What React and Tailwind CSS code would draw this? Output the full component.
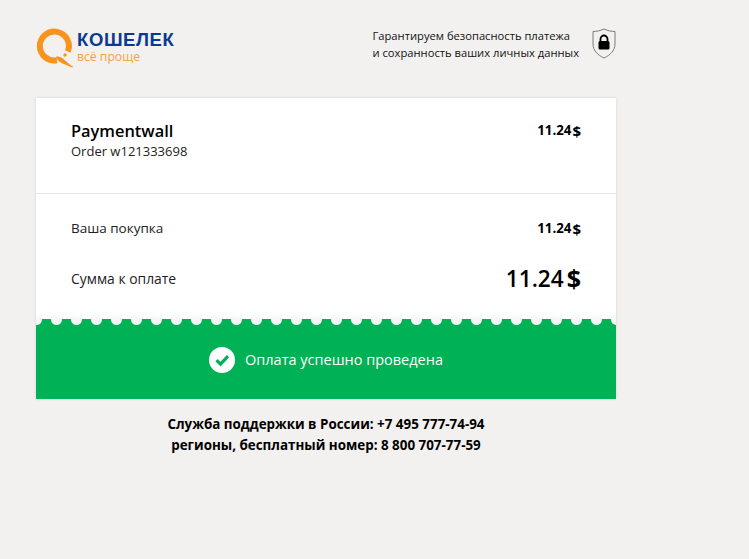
const font = 'font-["Open_Sans","Noto_Sans",sans-serif]'

function QiwiRing() {
  return (
    <svg width="40" height="42" viewBox="0 0 40 42" className="shrink-0">
      <path
        d="M21 32.300A14.500 14.500 0 1 1 31.800 23.500"
        fill="none"
        stroke="#f7941d"
        strokeWidth="6"
        strokeLinecap="butt"
      />
      <path d="M20 28.500c3.500-.5 6 1 8.500 3.500l5 4.200 3.500 2.600-.8.700-9-3.800c-3.500-1.500-6-3-7.200-7.200z" fill="#f7941d" />
      <circle cx="29" cy="27" r="1.700" fill="#f7941d" />
    </svg>
  )
}

function LockBadge() {
  return (
    <svg width="24" height="31" viewBox="0 0 24 31" className="shrink-0">
      <path d="M1 3.500c3.500 0 7-.7 11-2.500 4 1.800 7.500 2.500 11 2.500V16c0 6.500-4.500 11-11 14C5.500 27 1 22.500 1 16z" fill="#f3f1f0" stroke="#7b7b7b" strokeWidth="1" />
      <path d="M8.500 13.500V11a3.500 3.500 0 0 1 7 0v2.500" fill="none" stroke="#000" strokeWidth="1.800" />
      <rect x="6.500" y="13" width="11" height="8.500" rx="1.500" fill="#000" />
    </svg>
  )
}

function CheckCircle() {
  return (
    <svg width="26" height="26" viewBox="0 0 26 26" className="shrink-0">
      <circle cx="13" cy="13" r="13" fill="#fff" />
      <path d="M7.500 13.200l4 4 7.500-8" fill="none" stroke="#00b156" strokeWidth="3.200" />
    </svg>
  )
}

function Scallops() {
  const dots = Array.from({ length: 30 })
  return (
    <div className="absolute left-0 right-0 top-[-5px] h-[11px] overflow-hidden">
      <div className="flex ml-[-5px] gap-[9px]">
        {dots.map((_, i) => (
          <span key={i} className="block w-[11px] h-[11px] shrink-0 rounded-full bg-gradient-to-b from-[#fefefe] via-[#f8f7f6] to-[#f3f1f0]" />
        ))}
      </div>
    </div>
  )
}

function Amount({ className, gap }) {
  return (
    <span className={`flex items-center ${className}`}>
      <span>11.24</span>
      <span className={`font-bold ${gap}`}>$</span>
    </span>
  )
}

export default function App() {
  return (
    <div className={`min-h-[559px] bg-[#f3f1f0] text-black overflow-hidden ${font}`}>
      <div className="w-[580px] ml-[36px]">
        <header className="h-[98px] flex items-start justify-between">
          <div className="flex items-start mt-[28px]">
            <QiwiRing />
            <div className="ml-[1px] pt-[1px]">
              <div className="text-[#0a3a8f] text-[18.500px] leading-[21px] font-bold tracking-[0.6px] font-['Liberation_Sans',sans-serif]">КОШЕЛЕК</div>
              <div className="text-[#f7a13a] text-[12.200px] leading-[14px]">всё проще</div>
            </div>
          </div>
          <div className="flex items-start mt-[27px]">
            <div className="text-[11.200px] leading-[17px] text-[#111] whitespace-nowrap">
              Гарантируем безопасность платежа
              <br />
              и сохранность ваших личных данных
            </div>
            <div className="ml-[13px] mt-[1px]">
              <LockBadge />
            </div>
          </div>
        </header>

        <main className="bg-white shadow-[0_0_3px_rgba(0,0,0,0.12)]">
          <section className="h-[96px] px-[35px] pt-[23px] flex justify-between border-b border-[#e8e8e8]">
            <div>
              <div className="text-[16.400px] leading-[20px] font-semibold">Paymentwall</div>
              <div className="text-[13px] leading-[20px] text-[#222]">Order w121333698</div>
            </div>
            <Amount className="h-[20px] text-[13.300px] font-bold" gap="ml-[1px] text-[15px]" />
          </section>
          <section className="h-[125px] px-[35px]">
            <div className="flex justify-between items-center pt-[24px] h-[44px]">
              <span className="text-[13.500px] text-[#222]">Ваша покупка</span>
              <Amount className="mt-[2px] text-[13.300px] font-bold" gap="ml-[1px] text-[15px]" />
            </div>
            <div className="flex justify-between items-center mt-[26px] h-[30px]">
              <span className="text-[13.900px] text-[#222]">Сумма к оплате</span>
              <Amount className="text-[22.600px] font-semibold" gap="ml-[3px] text-[25px]" />
            </div>
          </section>
          <section className="relative h-[80px] pt-[1px] bg-[#00b156] flex items-center justify-center gap-[10px] text-white text-[14.500px]">
            <Scallops />
            <CheckCircle />
            <span>Оплата успешно проведена</span>
          </section>
        </main>

        <footer className="mt-[15px] text-center text-[13.400px] leading-[21px] font-bold">
          <div>Служба поддержки в России: +7 495 777-74-94</div>
          <div>регионы, бесплатный номер: 8 800 707-77-59</div>
        </footer>
      </div>
    </div>
  )
}
